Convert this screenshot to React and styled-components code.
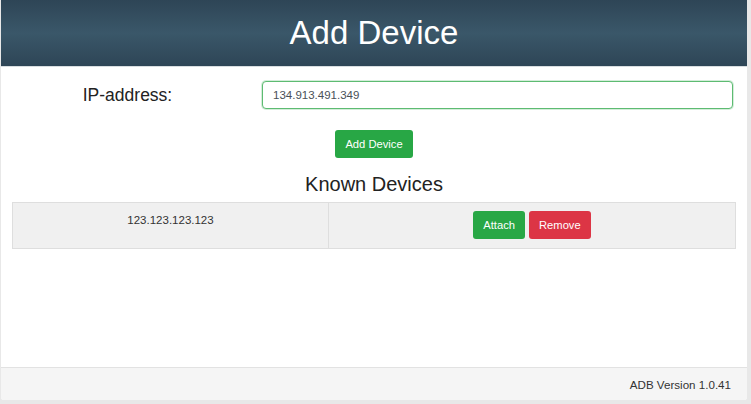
import styled, { createGlobalStyle } from 'styled-components'

const GlobalStyle = createGlobalStyle`
    html, body {
        margin: 0;
        padding: 0;
        background: #e8e8e8;
        font-family: "Liberation Sans", Arial, sans-serif;
        color: #222;
    }
`

const Card = styled.div`
    margin: 0 4px 0 1px;
    height: 400px;
    background: #fff;
    display: flex;
    flex-direction: column;
    border-radius: 0 0 3px 3px;
`

const Header = styled.header`
    height: 67px;
    display: flex;
    align-items: center;
    justify-content: center;
    background: linear-gradient(to bottom, #2e4556 0%, #3a5769 50%, #2e4556 100%);
    border-bottom: 1px solid #d8dde0;
    box-sizing: border-box;
`

const Title = styled.h1`
    margin: 0;
    color: #fff;
    font-weight: normal;
    font-size: 33px;
`

const Body = styled.main`
    flex: 1;
    display: flex;
    flex-direction: column;
    align-items: center;
    padding-top: 14px;
`

const FormRow = styled.div`
    align-self: stretch;
    display: grid;
    grid-template-columns: 253px 1fr;
    column-gap: 8px;
    align-items: center;
    padding-right: 14px;
`

const Label = styled.label`
    text-align: center;
    font-size: 17.5px;
    color: #222;
    padding-top: 1px;
`

const Input = styled.input`
    height: 28px;
    box-sizing: border-box;
    border: 1px solid #5dbb72;
    box-shadow: 0 0 0 1px rgba(40, 167, 69, 0.2);
    border-radius: 4px;
    padding: 0 10px;
    font-family: inherit;
    font-size: 11.5px;
    color: #495057;
    outline: none;
`

const Button = styled.button`
    height: 28px;
    padding: 0 10px;
    border: none;
    border-radius: 3px;
    font-family: "Liberation Sans", Arial, sans-serif;
    font-size: 11.2px;
    color: #fff;
    background: ${p => p.$danger ? '#dc3545' : '#28a745'};
    cursor: pointer;
`

const AddButton = styled(Button)`
    margin-top: 21px;
`

const SubTitle = styled.h2`
    margin: 14px 0 0;
    font-weight: normal;
    font-size: 20px;
    line-height: 24px;
    color: #222;
`

const Table = styled.table`
    align-self: stretch;
    margin: 6px 11px 0;
    border-collapse: collapse;
    table-layout: fixed;
    background: #f0f0f0;
`

const Cell = styled.td`
    border: 1px solid #dedede;
    text-align: center;
    vertical-align: top;
    padding: ${p => p.$actions ? '8px 0 9px' : '11px 0 0'};
    font-size: 11.5px;
    color: #333;
    width: ${p => p.$width || 'auto'};
`

const Actions = styled.div`
    display: flex;
    justify-content: center;
    gap: 4px;
`

const Footer = styled.footer`
    height: 33px;
    box-sizing: border-box;
    display: flex;
    align-items: center;
    justify-content: flex-end;
    padding-right: 16px;
    background: #f5f5f5;
    border-top: 1px solid #e2e2e2;
    border-radius: 0 0 3px 3px;
    font-size: 11.6px;
    color: #333;
`

const devices = ['123.123.123.123']

export default function App() {
    return (
        <>
            <GlobalStyle />
            <Card>
                <Header>
                    <Title>Add Device</Title>
                </Header>
                <Body>
                    <FormRow>
                        <Label htmlFor='ip'>IP-address:</Label>
                        <Input id='ip' type='text' defaultValue='134.913.491.349' />
                    </FormRow>
                    <AddButton type='button'>Add Device</AddButton>
                    <SubTitle>Known Devices</SubTitle>
                    <Table>
                        <tbody>
                            {devices.map(ip => (
                                <tr key={ip}>
                                    <Cell $width='315px'>{ip}</Cell>
                                    <Cell $actions>
                                        <Actions>
                                            <Button type='button'>Attach</Button>
                                            <Button type='button' $danger>Remove</Button>
                                        </Actions>
                                    </Cell>
                                </tr>
                            ))}
                        </tbody>
                    </Table>
                </Body>
                <Footer>ADB Version 1.0.41</Footer>
            </Card>
        </>
    )
}
